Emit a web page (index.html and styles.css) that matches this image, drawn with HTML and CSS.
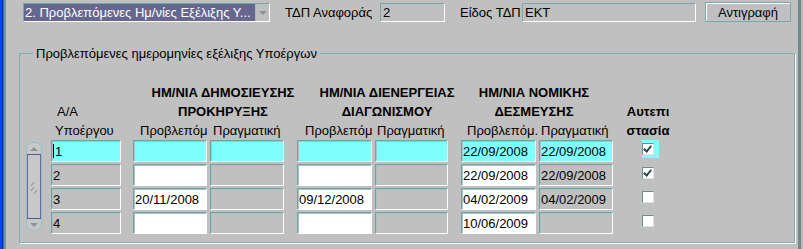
FILE: index.html
```html
<!DOCTYPE html>
<html lang="el">
<head>
    <meta charset="UTF-8">
    <title>Προβλεπόμενες Ημ/νίες Εξέλιξης Υποέργων</title>
    <link rel="stylesheet" href="styles.css">
</head>
<body>
    <div class="window">
        <div class="edge-left"></div>
        <div class="main">
            <div class="toolbar">
                <div class="combo">
                    <span class="combo-text">2. Προβλεπόμενες Ημ/νίες Εξέλιξης Υ...</span>
                    <span class="combo-btn"><span class="tri-down"></span></span>
                </div>
                <span class="lbl lbl-ref">ΤΔΠ Αναφοράς</span>
                <div class="tfield f-ref">2</div>
                <span class="lbl lbl-kind">Είδος ΤΔΠ</span>
                <div class="tfield f-kind">ΕΚΤ</div>
                <button class="btn">Αντιγραφή</button>
            </div>

            <fieldset class="group">
                <legend>Προβλεπόμενες ημερομηνίες εξέλιξης Υποέργων</legend>

                <div class="grid head">
                    <div class="h-grp g1">ΗΜ/ΝΙΑ ΔΗΜΟΣΙΕΥΣΗΣ<br>ΠΡΟΚΗΡΥΞΗΣ</div>
                    <div class="h-grp g2">ΗΜ/ΝΙΑ ΔΙΕΝΕΡΓΕΙΑΣ<br>ΔΙΑΓΩΝΙΣΜΟΥ</div>
                    <div class="h-grp g3">ΗΜ/ΝΙΑ ΝΟΜΙΚΗΣ<br>ΔΕΣΜΕΥΣΗΣ</div>
                    <div class="h-aa">Α/Α</div>
                    <div class="h-auto">Αυτεπι<br>στασία</div>
                    <div class="h-sub c-aa">Υποέργου</div>
                    <div class="h-sub c2">Προβλεπόμ</div>
                    <div class="h-sub c3">Πραγματική</div>
                    <div class="h-sub c4">Προβλεπόμ</div>
                    <div class="h-sub c5">Πραγματική</div>
                    <div class="h-sub c6">Προβλεπόμ.</div>
                    <div class="h-sub c7">Πραγματική</div>
                </div>

                <div class="grid body">
                    <div class="scroll">
                        <div class="scroll-btn top"><span class="tri-up"></span></div>
                        <div class="scroll-track">
                            <svg width="8" height="16" viewBox="0 0 8 16">
                                <path d="M1 7 L4 3 M1 12 L4 8 M4 15 L7 11" stroke="#7e8e8e" stroke-width="1" fill="none"/>
                            </svg>
                        </div>
                        <div class="scroll-btn bottom"><span class="tri-down"></span></div>
                    </div>

                    <!-- row 1 (current record) -->
                    <div class="fld cur c-aa r1"><span class="caret"></span>1</div>
                    <div class="fld cur c2 r1"></div>
                    <div class="fld cur c3 r1"></div>
                    <div class="fld cur c4 r1"></div>
                    <div class="fld cur c5 r1"></div>
                    <div class="fld cur c6 r1">22/09/2008</div>
                    <div class="fld cur c7 r1">22/09/2008</div>
                    <div class="chk-cell cur-cell r1"><span class="chk on"></span></div>

                    <!-- row 2 -->
                    <div class="fld c-aa r2">2</div>
                    <div class="fld edit c2 r2"></div>
                    <div class="fld c3 r2"></div>
                    <div class="fld edit c4 r2"></div>
                    <div class="fld c5 r2"></div>
                    <div class="fld edit c6 r2">22/09/2008</div>
                    <div class="fld c7 r2">22/09/2008</div>
                    <div class="chk-cell r2"><span class="chk on"></span></div>

                    <!-- row 3 -->
                    <div class="fld c-aa r3">3</div>
                    <div class="fld edit c2 r3">20/11/2008</div>
                    <div class="fld c3 r3"></div>
                    <div class="fld edit c4 r3">09/12/2008</div>
                    <div class="fld c5 r3"></div>
                    <div class="fld edit c6 r3">04/02/2009</div>
                    <div class="fld c7 r3">04/02/2009</div>
                    <div class="chk-cell r3"><span class="chk"></span></div>

                    <!-- row 4 -->
                    <div class="fld c-aa r4">4</div>
                    <div class="fld edit c2 r4"></div>
                    <div class="fld c3 r4"></div>
                    <div class="fld edit c4 r4"></div>
                    <div class="fld c5 r4"></div>
                    <div class="fld edit c6 r4">10/06/2009</div>
                    <div class="fld c7 r4"></div>
                    <div class="chk-cell r4"><span class="chk"></span></div>
                </div>
            </fieldset>
        </div>
        <div class="edge-right"></div>
    </div>
</body>
</html>
```

FILE: styles.css
```css
body {
    margin: 0;
    background: #c0c0c0;
    font-family: "Liberation Sans", Arial, sans-serif;
    font-size: 13px;
    color: #000;
    overflow: hidden;
}
.window {
    display: flex;
    width: 803px;
    height: 249px;
}
.edge-left {
    width: 6px;
    background: linear-gradient(to right, #0a46f5 0 2px, #0a2a9a 2px 3px, #4a6a9a 3px 4px, #6c9a9a 4px 6px);
}
.edge-right {
    width: 7px;
    background: linear-gradient(to right, #c0c0c0 0 2px, #6f8a8a 2px 5px, #b4bcbc 5px 7px);
}
.main {
    flex: 1;
    display: flex;
    flex-direction: column;
}

/* top bar */
.toolbar {
    display: flex;
    align-items: center;
    height: 20px;
    padding-top: 2px;
}
.combo {
    display: flex;
    margin-left: 17px;
    width: 247px;
    height: 19px;
    box-sizing: border-box;
    border: 1px solid #7aa8a8;
    border-right-color: #fff;
    border-bottom-color: #fff;
    background: #66668f;
    margin-top: 1px;
}
.combo-text {
    flex: 1;
    color: #fff;
    padding-left: 1px;
    line-height: 17px;
    white-space: nowrap;
    overflow: hidden;
}
.combo-btn {
    width: 13px;
    display: flex;
    align-items: center;
    justify-content: center;
    background: #c0c0c0;
    border-left: 1px solid #a8b8b8;
}
.tri-down, .tri-up {
    width: 0;
    height: 0;
    border-left: 4px solid transparent;
    border-right: 4px solid transparent;
}
.tri-down {
    border-top: 4px solid #8a9696;
}
.tri-up {
    border-bottom: 4px solid #8a9696;
}
.lbl {
    white-space: nowrap;
}
.lbl-ref {
    margin-left: 15px;
    width: 95px;
}
.lbl-kind {
    margin-left: 15px;
    width: 62px;
}
.tfield {
    height: 19px;
    box-sizing: border-box;
    border: 1px solid #7aa8a8;
    border-right-color: #fff;
    border-bottom-color: #fff;
    padding: 1px 2px 0;
    line-height: 16px;
    margin-top: 1px;
}
.f-ref {
    width: 65px;
}
.f-kind {
    width: 174px;
}
.btn {
    margin-left: 9px;
    width: 86px;
    height: 20px;
    background: #c0c0c0;
    border: 1px solid #7aa8a8;
    box-shadow: inset 1px 1px 0 #fff;
    font-family: inherit;
    font-size: 13px;
    padding: 0;
}

/* group box */
.group {
    margin: 24px 1px 0 13px;
    padding: 22px 0 8px 6px;
    border: 1px solid #7fb0b0;
    box-shadow: 1px 1px 0 #fff;
    min-width: 0;
}
.group legend {
    margin-left: 7px;
    padding: 0 3px;
    line-height: 15px;
}
.grid {
    display: grid;
    grid-template-columns: 16px 3px 70px 6px 74px 74px 7px 75px 73px 7px 75px 74px 64px;
    column-gap: 3px;
}
.head {
    grid-template-rows: 19px 19px 19px;
    line-height: 19px;
    white-space: nowrap;
}
.h-grp {
    grid-row: 1 / span 2;
    font-weight: bold;
    text-align: center;
}
.g1 {
    grid-column: 5 / span 2;
    margin-right: -29px;
}
.g2 {
    grid-column: 8 / span 2;
    margin-right: -29px;
}
.g3 {
    grid-column: 11 / span 2;
    margin-left: -6px;
}
.h-aa {
    grid-row: 2;
    grid-column: 3;
    padding-left: 6px;
}
.h-auto {
    grid-row: 2 / span 2;
    grid-column: 13;
    font-weight: bold;
    text-align: center;
}
.h-sub {
    grid-row: 3;
}
.h-sub.c-aa { padding-left: 4px; }
.h-sub.c2 { padding-left: 7px; }
.h-sub.c3 { padding-left: 3px; }
.h-sub.c4 { padding-left: 8px; }
.h-sub.c5 { padding-left: 2px; }
.h-sub.c6 { padding-left: 6px; }
.h-sub.c7 { padding-left: 2px; }

.c-aa { grid-column: 3; }
.c2 { grid-column: 5; }
.c3 { grid-column: 6; }
.c4 { grid-column: 8; }
.c5 { grid-column: 9; }
.c6 { grid-column: 11; }
.c7 { grid-column: 12; }

.body {
    grid-template-rows: repeat(4, 22px);
    row-gap: 2px;
}
.r1 { grid-row: 1; }
.r2 { grid-row: 2; }
.r3 { grid-row: 3; }
.r4 { grid-row: 4; }

.fld {
    box-sizing: border-box;
    height: 22px;
    border: 1px solid #74a2a2;
    border-right-color: #fff;
    border-bottom-color: #fff;
    box-shadow: inset 1px 1px 0 #a4c4c4;
    background: #c0c0c0;
    padding: 2px 2px 0 1px;
    line-height: 18px;
    white-space: nowrap;
}
.fld.edit {
    background: #fff;
}
.fld.cur {
    background: #80ffff;
}
.caret {
    display: inline-block;
    width: 1px;
    height: 14px;
    background: #000;
    vertical-align: -2px;
    margin-right: 1px;
}
.chk-cell {
    grid-column: 13;
    justify-self: center;
    display: flex;
    align-items: center;
    justify-content: center;
    width: 17px;
    height: 18px;
    margin-left: 4px;
}
.chk-cell.cur-cell {
    background: #80ffff;
}
.chk {
    width: 12px;
    height: 12px;
    box-sizing: border-box;
    border: 1px solid #6e8e8e;
    border-right-color: #d8e4e4;
    border-bottom-color: #d8e4e4;
    background: #fff;
    position: relative;
    margin-left: -5px;
}
.chk.on::after {
    content: "";
    position: absolute;
    left: 2px;
    top: 0;
    width: 3px;
    height: 6px;
    border-right: 2px solid #2f4a4a;
    border-bottom: 2px solid #2f4a4a;
    transform: rotate(40deg);
}

/* record scrollbar */
.scroll {
    grid-column: 1;
    grid-row: 1 / span 4;
    margin: 2px 0 3px;
    display: flex;
    flex-direction: column;
    border: 1px solid #90c4c4;
    border-radius: 7px;
    background: #c8c8c8;
}
.scroll-btn {
    height: 11px;
    display: flex;
    align-items: center;
    justify-content: center;
}
.scroll-btn.top {
    border-bottom: 1px solid #5a5a8a;
}
.scroll-btn.bottom {
    border-top: 1px solid #5a5a8a;
}
.scroll-track {
    flex: 1;
    border-left: 1px solid #6a6aa0;
    border-right: 1px solid #6a6aa0;
    display: flex;
    align-items: center;
    justify-content: center;
}
```
